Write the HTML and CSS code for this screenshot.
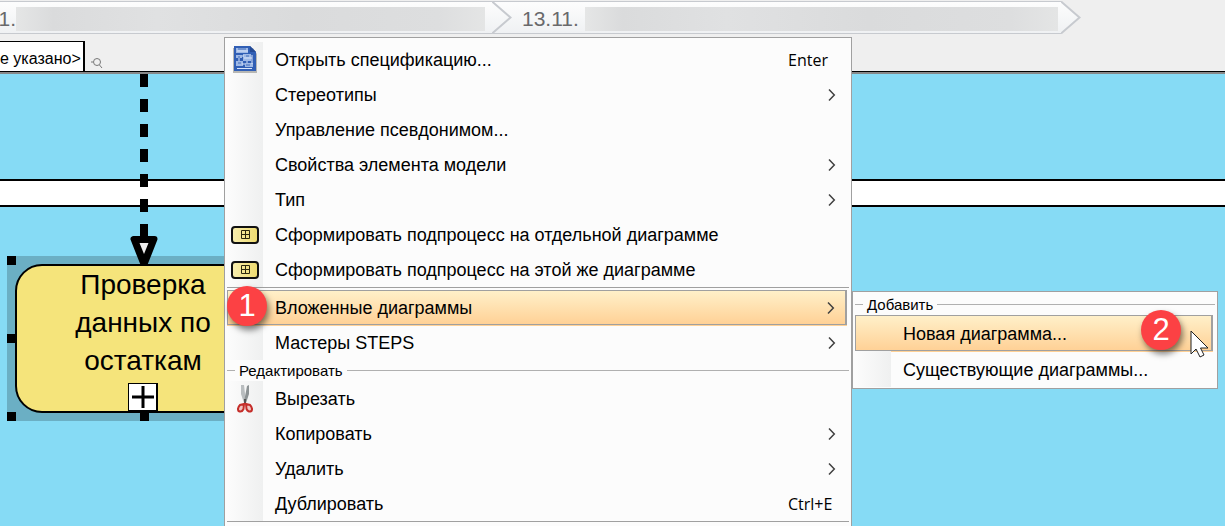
FILE: index.html
```
<!DOCTYPE html>
<html lang="ru">
<head>
  <meta charset="UTF-8">
  <meta name="viewport" content="width=device-width, initial-scale=1.0">
  <title>Редактор диаграмм</title>
  <link rel="stylesheet" href="styles.css">
</head>
<body>
  <svg class="symbols" aria-hidden="true">
    <symbol id="arrow" viewBox="0 0 8 14"><path d="M1 1.5L6.3 7L1 12.5" fill="none" stroke="#404040" stroke-width="1.5"/></symbol>
    <symbol id="tip" viewBox="0 0 20 33">
      <path d="M0 0L19 16.5L0 33Z" fill="url(#tipFill)"/>
      <path d="M0 .5L18.5 16.5L0 32.5" fill="none" stroke="#c7cacf" stroke-width="2"/>
    </symbol>
    <symbol id="subprocess" viewBox="0 0 28 18">
      <rect x="1" y="1" width="26" height="16" rx="3" fill="url(#subFill)" stroke="#111" stroke-width="2"/>
      <path d="M10.5 4.5h8v8h-8zM14.5 4.5v8M10.5 8.5h8" fill="none" stroke="#2c280e"/>
    </symbol>
    <linearGradient id="tipFill" x1="0" y1="0" x2="0" y2="1"><stop stop-color="#fdfdfd"/><stop offset="1" stop-color="#eff1f3"/></linearGradient>
    <linearGradient id="subFill"><stop stop-color="#f8eeb0"/><stop offset="1" stop-color="#eedb6e"/></linearGradient>
  </svg>

  <nav class="crumbs">
    <a href="#" class="crumb first"><span class="crumb-num">1.</span><span class="blur"></span></a>
    <svg class="tip"><use href="#tip"/></svg>
    <a href="#" class="crumb"><span class="crumb-num">13.11.</span><span class="blur"></span></a>
    <svg class="tip"><use href="#tip"/></svg>
  </nav>

  <div class="toolbar">
    <button class="name-box">е указано&gt;</button>
    <button class="search" aria-label="Найти">
      <svg width="12" height="12" viewBox="0 0 12 12" fill="none" stroke="#777"><circle cx="6" cy="5" r="3.5"/><path d="M8.5 8l2.5 3M0 5h2"/></svg>
    </button>
  </div>

  <main class="canvas">
    <div class="lane lane-top"></div>
    <div class="lane-gap"></div>
    <div class="lane"></div>

    <div class="selection">
      <div class="task">
        <p>Проверка<br>данных по<br>остаткам</p>
        <button class="expand" aria-label="Развернуть">
          <svg width="24" height="24" viewBox="0 0 24 24"><path d="M12 1v22M1 12h22" stroke="#000" stroke-width="3"/></svg>
        </button>
      </div>
      <i class="handle tl"></i><i class="handle ml"></i><i class="handle bl"></i><i class="handle bc"></i>
    </div>

    <svg class="flow" width="30" height="194" viewBox="0 0 30 194">
      <path d="M15 0V158" stroke="#000" stroke-width="8" stroke-dasharray="13 12"/>
      <path d="M15 153v14" stroke="#000" stroke-width="8"/>
      <path d="M4.500 165h21L16 189h-2z" fill="#000" stroke="#000" stroke-width="6" stroke-linejoin="round"/>
      <path d="M10.500 169h9L15 180z" fill="#eee"/>
    </svg>
  </main>

  <div class="menu context">
    <button class="item">
      <span class="icon"><svg width="24" height="27" viewBox="0 0 24 27">
        <path d="M0 2H20L24 8V27H0z" fill="#b7b7b4"/>
        <path d="M1 0H17L23 6V25H1z" fill="#315fb5"/>
        <path d="M3 2h12v5H3zM3 9h6v3H3zM10 8h8v7h-8zM3 15h7v5H3zM12 17h8v4h-8z" fill="#9fb9e6"/>
        <path d="M4 5h11M9 10h2M6 12v3M14 15v2M9 18h3M4 22.500h15M11 12h8M19 9v9" stroke="#dbe6fa" fill="none"/>
        <path d="M13 10h3M5 17h3M13 19h4M5 3h8M5 11h2" stroke="#416cba"/>
        <path d="M17 0V6H23z" fill="#244a96"/>
      </svg></span>
      <span class="label">Открыть спецификацию...</span><kbd>Enter</kbd>
    </button>
    <button class="item"><span class="icon"></span><span class="label">Стереотипы</span><svg class="more"><use href="#arrow"/></svg></button>
    <button class="item"><span class="icon"></span><span class="label">Управление псевдонимом...</span></button>
    <button class="item"><span class="icon"></span><span class="label">Свойства элемента модели</span><svg class="more"><use href="#arrow"/></svg></button>
    <button class="item"><span class="icon"></span><span class="label">Тип</span><svg class="more"><use href="#arrow"/></svg></button>
    <button class="item"><span class="icon"><svg width="28" height="18"><use href="#subprocess"/></svg></span><span class="label">Сформировать подпроцесс на отдельной диаграмме</span></button>
    <button class="item"><span class="icon"><svg width="28" height="18"><use href="#subprocess"/></svg></span><span class="label">Сформировать подпроцесс на этой же диаграмме</span></button>
    <hr>
    <div class="parent">
      <button class="item active"><span class="icon"></span><span class="label">Вложенные диаграммы</span><svg class="more"><use href="#arrow"/></svg></button>
      <span class="step step-one">1</span>

      <div class="menu submenu">
        <div class="group">Добавить</div>
        <button class="item active"><span class="icon"></span><span class="label">Новая диаграмма...</span></button>
        <button class="item"><span class="icon"></span><span class="label">Существующие диаграммы...</span></button>
        <span class="step step-two">2</span>
        <svg class="cursor" width="20" height="28" viewBox="0 0 20 28"><path d="M1 1V24L6 19L10 27L14 25L10.500 18H18z" fill="#fff" stroke="#222"/></svg>
      </div>
    </div>
    <button class="item"><span class="icon"></span><span class="label">Мастеры STEPS</span><svg class="more"><use href="#arrow"/></svg></button>
    <div class="group">Редактировать</div>
    <button class="item">
      <span class="icon"><svg width="16" height="28" viewBox="0 0 16 28">
        <path d="M4 0H7L9 17L7 18L4 9z" fill="#b9bdbf"/>
        <path d="M10 1L12 0V9L9 18L7 17z" fill="#8d9395"/>
        <path d="M8 14v4" stroke="#555" stroke-width="2"/>
        <path d="M7 19L3 20Q0 23 1.500 26Q5 27.500 6.500 24zM9 19L13 20Q16 23 14.500 26Q11 27.500 9.500 24z" fill="#f0c5c2" stroke="#c52e2a" stroke-width="2"/>
      </svg></span>
      <span class="label">Вырезать</span>
    </button>
    <button class="item"><span class="icon"></span><span class="label">Копировать</span><svg class="more"><use href="#arrow"/></svg></button>
    <button class="item"><span class="icon"></span><span class="label">Удалить</span><svg class="more"><use href="#arrow"/></svg></button>
    <button class="item"><span class="icon"></span><span class="label">Дублировать</span><kbd>Ctrl+E</kbd></button>
    <hr>
  </div>
</body>
</html>
```

FILE: styles.css
```
* { box-sizing: border-box; }
body {
  margin: 0; height: 100vh; overflow: hidden; position: relative;
  display: flex; flex-direction: column;
  font-family: "Liberation Sans", Arial, sans-serif; background: #efefef; color: #000;
}
button { font: inherit; color: inherit; margin: 0; padding: 0; border: 0; background: none; text-align: left; }
.symbols { position: absolute; width: 0; height: 0; }

/* breadcrumbs */
.crumbs { display: flex; padding-top: 1px; height: 41px; flex: none; }
.crumb {
  display: flex; align-items: center; height: 33px; padding: 3px 3px 0 30px;
  border-top: 1px solid #c7cacf; border-bottom: 1px solid #c7cacf;
  background: linear-gradient(#fdfdfd, #eff1f3);
  font-size: 21px; color: #69696b; text-decoration: none;
}
.crumb.first { width: 492px; padding-left: 0; padding-right: 7px; justify-content: flex-end; }
.crumb-num { margin-right: 6px; }
.first .crumb-num { margin-right: 0; }
.blur { flex: none; width: 473px; height: 24px; background: linear-gradient(90deg, #e5e6e6, #dadbdc 8%, #e0e1e2 30%, #dadbdc 60%, #dddedf 90%, #e4e5e5); }
.first .blur { width: 469px; }
/* the tip lies over the start of the next crumb */
.tip { width: 20px; height: 33px; flex: none; margin-right: -20px; z-index: 1; }

.toolbar { display: flex; height: 31px; flex: none; border-bottom: 1px solid #000; }
.name-box {
  width: 85px; padding: 4px 4px 0 0; text-align: right; white-space: nowrap; overflow: hidden;
  font-size: 16px; background: #fff; border: solid #000; border-width: 1px 2px 0 0;
}
.search { margin: 16px 0 0 6px; height: 12px; display: flex; }

/* diagram */
.canvas { flex: 1; position: relative; display: flex; flex-direction: column; overflow: hidden; border-top: 2px solid #888; background: #86dbf5; }
.lane { flex: 1; }
.lane-top { flex: none; height: 105px; }
.lane-gap { height: 28px; flex: none; background: #fff; border: solid #000; border-width: 2px 0; }
.flow { position: absolute; left: 129px; top: 0; }
.selection { position: absolute; left: 7px; top: 182px; width: 272px; padding: 8px; background: #6bafc4; }
.task {
  display: flex; flex-direction: column; align-items: center; justify-content: space-between; height: 149px;
  border: 2px solid #000; border-radius: 27px; background: #f5e47b;
}
.task p { margin: 0; font-size: 28px; line-height: 38px; text-align: center; }
.expand { display: flex; align-items: center; justify-content: center; width: 30px; height: 28px; background: #fff; border: solid #000; border-width: 1px 2px 1px 1px; }
.handle { position: absolute; width: 9px; height: 9px; background: #000; }
.tl { left: 0; top: 0; }
.ml { left: 0; top: 78px; }
.bl { left: 0; bottom: 0; }
.bc { left: 133px; bottom: 0; }

/* menus */
.menu { position: absolute; padding: 4px 2px; background: #fcfcfc; border: 1px solid #a0a0a0; font-size: 18px; }
.context { left: 224px; top: 37px; width: 628px; }
.item { display: flex; align-items: center; width: 100%; height: 35px; white-space: nowrap; }
.icon {
  display: flex; align-items: center; justify-content: center; flex: none;
  width: 36px; height: 100%; margin-right: 12px;
  background: linear-gradient(90deg, #fcfcfc, #eff0f0);
}
.label { flex: 1; padding-top: 2px; }
.item kbd { width: 61px; font: 16px "Open Sans", "Noto Sans", sans-serif; }
.more { width: 8px; height: 14px; margin-right: 13px; }
.menu hr { margin: 0 0 2px; border: 0; border-top: 1px solid #a0a0a0; }
.parent { position: relative; }
.active { width: calc(100% - 2px); border: 1px solid #a0a0a0; border-right-width: 2px; background: linear-gradient(#fff0c9, #ffd196); box-shadow: 0 1px #ffd196; }
.active .icon { width: 35px; background: none; }
.active .more { margin-right: 10px; }
.group { display: flex; align-items: center; gap: 4px; height: 21px; font-size: 15px; }
.group::before, .group::after { content: ""; height: 1px; width: 8px; background: #b0b0b0; }
.group::after { flex: 1; }
.submenu { left: 625px; top: 1px; width: 366px; padding: 2px 2px 1px; }
.submenu .item { height: 36px; }
.step {
  position: absolute; width: 40px; height: 40px; border-radius: 50%;
  background: #fc4144; color: #fff; font-size: 31px; line-height: 40px; text-align: center;
  box-shadow: 2px 4px 6px rgba(0, 0, 0, .5);
}
.step-one { left: 0; top: -4px; }
.step-two { left: 288px; top: 18px; }
.cursor { position: absolute; left: 337px; top: 38px; }
```
